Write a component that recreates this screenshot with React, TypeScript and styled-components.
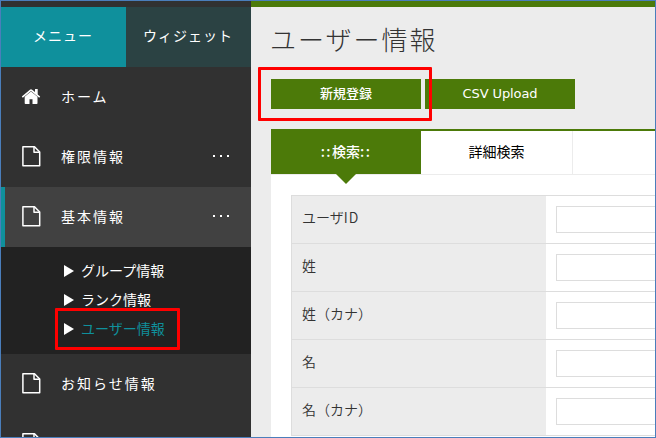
import React from 'react';
import styled, { createGlobalStyle, css } from 'styled-components';

const Global = createGlobalStyle`
  * { box-sizing: border-box; }
  body { margin: 0; overflow: hidden; }
`;

const Frame = styled.div`
  position: relative;
  display: flex;
  width: 656px;
  height: 438px;
  overflow: hidden;
  border: 1px solid #4a7ebb;
  background: #ececec;
  font-family: 'Noto Sans CJK JP', sans-serif;
  font-size: 14px;
  color: #333;
  white-space: nowrap;
`;

const Sidebar = styled.aside`
  flex: 0 0 250px;
  padding-top: 6px;
  background: #313131;
  color: #fff;
`;

const SideTabs = styled.div`
  display: flex;
  height: 60px;
`;

const SideTab = styled.div<{ $active?: boolean }>`
  flex: 1;
  display: flex;
  align-items: center;
  justify-content: center;
  padding: 0 1px 5px 0;
  letter-spacing: 1px;
  background: ${(p) => (p.$active ? '#0f909c' : '#2b4243')};
`;

const MenuItem = styled.div<{ $active?: boolean }>`
  display: flex;
  align-items: center;
  height: 60px;
  padding: 0 20px 2px 15px;
  border-left: 5px solid transparent;
  letter-spacing: 2px;
  ${(p) => p.$active && css`
    background: #414141;
    border-left: 4px solid #0f909c;
    padding-left: 16px;
  `}
`;

const MenuIcon = styled.svg`
  flex: none;
  width: 20px;
  height: 24px;
  margin-right: 20px;
`;

const MenuText = styled.span`
  flex: 1;
`;

const Dots = styled.span`
  display: flex;
  gap: 5px;
  margin-right: 2px;
  &::before, &::after { content: ''; }
  i, &::before, &::after { width: 2px; height: 2px; background: #fff; }
`;

const SubMenu = styled.div`
  height: 107px;
  padding: 9px 0 0 63px;
  background: #222;
`;

const SubItem = styled.div<{ $current?: boolean }>`
  display: flex;
  align-items: center;
  height: 29px;
  padding-bottom: 2px;
  gap: 7px;
  color: ${(p) => (p.$current ? '#0f909c' : '#fff')};
  &::before {
    content: '';
    position: relative;
    top: 1px;
    border-left: 10px solid #fff;
    border-top: 6px solid transparent;
    border-bottom: 6px solid transparent;
  }
`;

const Main = styled.main`
  flex: 1;
  min-width: 0;
  padding-left: 20px;
  border-top: 6px solid #4c7a09;
`;

const Title = styled.h1`
  margin: 0 0 0 -1px;
  height: 72px;
  line-height: 64px;
  font-size: 26px;
  font-weight: 300;
  letter-spacing: 2px;
`;

const Buttons = styled.div`
  display: flex;
  gap: 4px;
`;

const Button = styled.button<{ $latin?: boolean }>`
  width: 150px;
  height: 30px;
  padding: 0 0 4px;
  border: 0;
  background: #4c7a09;
  color: #fff;
  font: 500 13px 'Noto Sans CJK JP', sans-serif;
  ${(p) => p.$latin && css`
    font: 13px 'DejaVu Sans', sans-serif;
    padding-bottom: 2px;
    letter-spacing: -0.1px;
  `}
`;

const Panel = styled.section`
  height: 320px;
  margin-top: 20px;
  border-top: 2px solid #4c7a09;
  background: #fff;
`;

const Tabs = styled.div`
  display: flex;
  height: 44px;
  border-bottom: 1px solid #ececec;
`;

const Tab = styled.div<{ $active?: boolean }>`
  position: relative;
  width: ${(p) => (p.$active ? 150 : 152)}px;
  line-height: 40px;
  text-align: center;
  color: #000;
  border-right: 1px solid #ececec;
  ${(p) => p.$active && css`
    border: 0;
    background: #4c7a09;
    color: #fff;
    font-weight: 500;
    &::after {
      content: '';
      position: absolute;
      top: 43px;
      left: 65px;
      border: 10px solid transparent;
      border-bottom: 0;
      border-top-color: #4c7a09;
    }
  `}
`;

const Colons = styled.span`
  letter-spacing: 1.5px;
`;

const Form = styled.div`
  margin: 20px 0 0 20px;
  border: solid #ddd;
  border-width: 1px 0 0 1px;
`;

const Row = styled.div`
  display: flex;
  height: 48px;
  border-bottom: 1px solid #ddd;
`;

const Label = styled.label`
  flex: 0 0 254px;
  padding-left: 10px;
  line-height: 43px;
  font-weight: 350;
  background: #ececec;
`;

const Latin = styled.span`
  letter-spacing: 1px;
`;

const Input = styled.input`
  width: 200px;
  height: 27px;
  margin: 10px;
  border: 1px solid #ddd;
  background: #fff;
`;

const Highlight = styled.div<{ $x: number; $y: number; $w: number; $h: number }>`
  position: absolute;
  left: ${(p) => p.$x}px;
  top: ${(p) => p.$y}px;
  width: ${(p) => p.$w}px;
  height: ${(p) => p.$h}px;
  border: 3px solid #f00;
  border-radius: 1px;
`;

const HomeIcon = () => (
  <MenuIcon viewBox="0 0 20 24" fill="#fff">
    <path d="M10 7.4 3.7 12.7V19.2q0 .8.8.8H8.5V15.2h3V20h4.2q.8 0 .8-.8V12.7Z" />
    <path d="M19.2 12.5 16.7 10.4V5H14V8.1L11.1 5.7q-1.1-.9-2.2 0L.8 12.5l1 1.2L10 6.9l8.2 6.8Z" />
  </MenuIcon>
);

const FileIcon = () => (
  <MenuIcon viewBox="0 0 20 24" fill="none" stroke="#fff" strokeWidth="1.5" strokeLinejoin="round">
    <path d="M1.9 2.8H13.5L18.7 8V21.8H1.9Z" />
    <path d="M13 2.8V8.2H18.7" />
  </MenuIcon>
);

const More = () => <Dots><i /></Dots>;

const fields = ['姓', '姓（カナ）', '名', '名（カナ）'];

export default function App() {
  return (
    <Frame>
      <Global />
      <Sidebar>
        <SideTabs>
          <SideTab $active>メニュー</SideTab>
          <SideTab>ウィジェット</SideTab>
        </SideTabs>
        <MenuItem><HomeIcon /><MenuText>ホーム</MenuText></MenuItem>
        <MenuItem><FileIcon /><MenuText>権限情報</MenuText><More /></MenuItem>
        <MenuItem $active><FileIcon /><MenuText>基本情報</MenuText><More /></MenuItem>
        <SubMenu>
          <SubItem>グループ情報</SubItem>
          <SubItem>ランク情報</SubItem>
          <SubItem $current>ユーザー情報</SubItem>
        </SubMenu>
        <MenuItem><FileIcon /><MenuText>お知らせ情報</MenuText></MenuItem>
        <MenuItem><FileIcon /></MenuItem>
      </Sidebar>
      <Main>
        <Title>ユーザー情報</Title>
        <Buttons>
          <Button>新規登録</Button>
          <Button $latin>CSV Upload</Button>
        </Buttons>
        <Panel>
          <Tabs>
            <Tab $active><Colons>::</Colons>検索<Colons>::</Colons></Tab>
            <Tab>詳細検索</Tab>
          </Tabs>
          <Form>
            <Row><Label>ユーザ<Latin>ID</Latin></Label><Input /></Row>
            {fields.map((name) => (
              <Row key={name}><Label>{name}</Label><Input /></Row>
            ))}
          </Form>
        </Panel>
      </Main>
      <Highlight $x={257} $y={66} $w={174} $h={54} />
      <Highlight $x={54} $y={307} $w={125} $h={42} />
    </Frame>
  );
}
